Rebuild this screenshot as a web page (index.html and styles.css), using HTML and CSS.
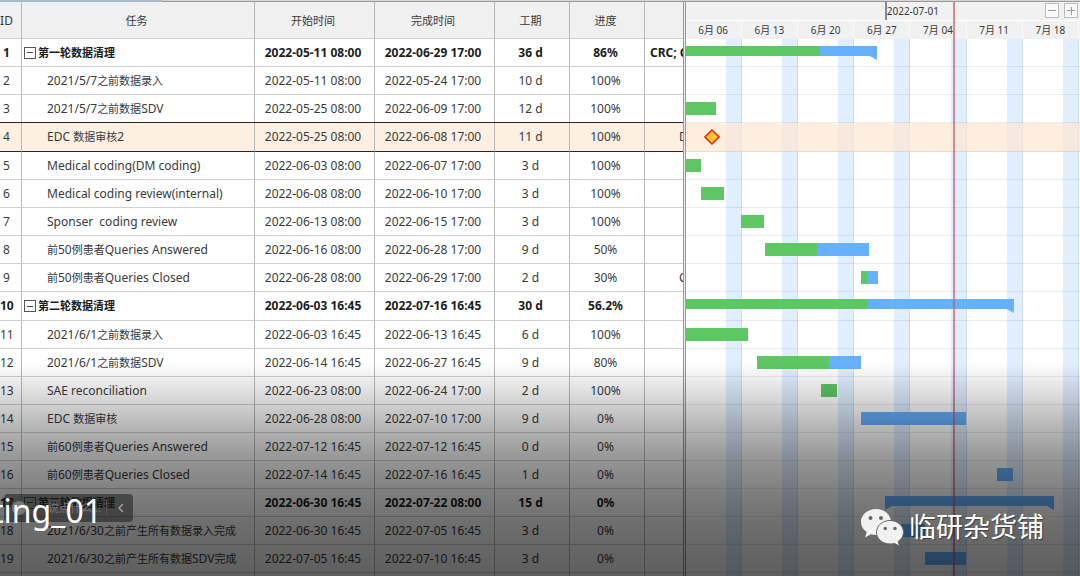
FILE: index.html
```html
<!DOCTYPE html>
<html lang="zh-CN">
<head>
<meta charset="utf-8">
<title>项目计划</title>
<link rel="stylesheet" href="styles.css">
</head>
<body>
<main class="planner">
  <div class="strip"><span class="strip-active"></span></div>
  <div class="panes">
    <section class="sheet">
      <table class="tasks">
        <colgroup><col class="c-id"><col class="c-name"><col class="c-date"><col class="c-date"><col class="c-num"><col class="c-num"><col></colgroup>
        <thead>
          <tr><th class="id">ID</th><th>任务</th><th>开始时间</th><th>完成时间</th><th>工期</th><th>进度</th><th></th></tr>
        </thead>
        <tbody>
          <tr class="group"><td class="id">1</td><td class="name"><button class="fold" aria-label="折叠"></button><span class="zh">第一轮数据清理</span></td><td>2022-05-11 08:00</td><td>2022-06-29 17:00</td><td>36 d</td><td>86%</td><td class="res">CRC; CRA</td></tr>
          <tr><td class="id">2</td><td class="name">2021/5/7<span class="zh">之前数据录入</span></td><td>2022-05-11 08:00</td><td>2022-05-24 17:00</td><td>10 d</td><td>100%</td><td></td></tr>
          <tr><td class="id">3</td><td class="name">2021/5/7<span class="zh">之前数据</span>SDV</td><td>2022-05-25 08:00</td><td>2022-06-09 17:00</td><td>12 d</td><td>100%</td><td></td></tr>
          <tr class="selected tall"><td class="id">4</td><td class="name">EDC <span class="zh">数据审核</span>2</td><td>2022-05-25 08:00</td><td>2022-06-08 17:00</td><td>11 d</td><td>100%</td><td class="res short">DM</td></tr>
          <tr><td class="id">5</td><td class="name">Medical coding(DM coding)</td><td>2022-06-03 08:00</td><td>2022-06-07 17:00</td><td>3 d</td><td>100%</td><td></td></tr>
          <tr><td class="id">6</td><td class="name">Medical coding review(internal)</td><td>2022-06-08 08:00</td><td>2022-06-10 17:00</td><td>3 d</td><td>100%</td><td></td></tr>
          <tr><td class="id">7</td><td class="name">Sponser&nbsp; coding review</td><td>2022-06-13 08:00</td><td>2022-06-15 17:00</td><td>3 d</td><td>100%</td><td></td></tr>
          <tr><td class="id">8</td><td class="name"><span class="zh">前</span>50<span class="zh">例患者</span>Queries Answered</td><td>2022-06-16 08:00</td><td>2022-06-28 17:00</td><td>9 d</td><td>50%</td><td></td></tr>
          <tr><td class="id">9</td><td class="name"><span class="zh">前</span>50<span class="zh">例患者</span>Queries Closed</td><td>2022-06-28 08:00</td><td>2022-06-29 17:00</td><td>2 d</td><td>30%</td><td class="res short">CRC</td></tr>
          <tr class="group tall"><td class="id">10</td><td class="name"><button class="fold" aria-label="折叠"></button><span class="zh">第二轮数据清理</span></td><td>2022-06-03 16:45</td><td>2022-07-16 16:45</td><td>30 d</td><td>56.2%</td><td></td></tr>
          <tr><td class="id">11</td><td class="name">2021/6/1<span class="zh">之前数据录入</span></td><td>2022-06-03 16:45</td><td>2022-06-13 16:45</td><td>6 d</td><td>100%</td><td></td></tr>
          <tr><td class="id">12</td><td class="name">2021/6/1<span class="zh">之前数据</span>SDV</td><td>2022-06-14 16:45</td><td>2022-06-27 16:45</td><td>9 d</td><td>80%</td><td></td></tr>
          <tr><td class="id">13</td><td class="name">SAE reconciliation</td><td>2022-06-23 08:00</td><td>2022-06-24 17:00</td><td>2 d</td><td>100%</td><td></td></tr>
          <tr><td class="id">14</td><td class="name">EDC <span class="zh">数据审核</span></td><td>2022-06-28 08:00</td><td>2022-07-10 17:00</td><td>9 d</td><td>0%</td><td></td></tr>
          <tr><td class="id">15</td><td class="name"><span class="zh">前</span>60<span class="zh">例患者</span>Queries Answered</td><td>2022-07-12 16:45</td><td>2022-07-12 16:45</td><td>0 d</td><td>0%</td><td></td></tr>
          <tr><td class="id">16</td><td class="name"><span class="zh">前</span>60<span class="zh">例患者</span>Queries Closed</td><td>2022-07-14 16:45</td><td>2022-07-16 16:45</td><td>1 d</td><td>0%</td><td></td></tr>
          <tr class="group"><td class="id">17</td><td class="name"><button class="fold" aria-label="折叠"></button><span class="zh">第三轮数据清理</span></td><td>2022-06-30 16:45</td><td>2022-07-22 08:00</td><td>15 d</td><td>0%</td><td></td></tr>
          <tr><td class="id">18</td><td class="name">2021/6/30<span class="zh">之前产生所有数据录入完成</span></td><td>2022-06-30 16:45</td><td>2022-07-05 16:45</td><td>3 d</td><td>0%</td><td></td></tr>
          <tr><td class="id">19</td><td class="name">2021/6/30<span class="zh">之前产生所有数据</span>SDV<span class="zh">完成</span></td><td>2022-07-05 16:45</td><td>2022-07-10 16:45</td><td>3 d</td><td>0%</td><td></td></tr>
          <tr><td></td><td></td><td></td><td></td><td></td><td></td><td></td></tr>
        </tbody>
      </table>
    </section>
    <div class="splitter"></div>
    <section class="gantt">
      <header class="scale">
        <div class="months">
          <span class="month" style="margin-left:50.5%">2022-07-01</span>
          <div class="zoomers"><button class="zoom" aria-label="缩小"></button><button class="zoom plus" aria-label="放大"></button></div>
        </div>
        <div class="weeks"><span>6月 06</span><span>6月 13</span><span>6月 20</span><span>6月 27</span><span>7月 04</span><span>7月 11</span><span>7月 18</span></div>
      </header>
      <div class="chart">
        <div class="weekends"><i></i><i></i><i></i><i></i><i></i><i></i><i></i></div>
        <div class="lanes">
          <div class="lane"><div class="bar sum end" style="width:48.5%"><b style="width:70.2%"></b></div></div>
          <div class="lane"></div>
          <div class="lane"><div class="bar" style="width:7.7%"><b style="width:100%"></b></div></div>
          <div class="lane selected tall"><svg class="milestone" style="margin-left:4.8%" viewBox="0 0 16 16"><path d="M8 1 15 8 8 15 1 8Z" fill="#ffc72c" stroke="#e3301c" stroke-width="1.6"/></svg></div>
          <div class="lane"><div class="bar" style="width:3.9%"><b style="width:100%"></b></div></div>
          <div class="lane"><div class="bar" style="margin-left:3.8%;width:6%"><b style="width:100%"></b></div></div>
          <div class="lane"><div class="bar" style="margin-left:14%;width:6%"><b style="width:100%"></b></div></div>
          <div class="lane"><div class="bar" style="margin-left:20.1%;width:26.4%"><b style="width:50%"></b></div></div>
          <div class="lane"><div class="bar" style="margin-left:44.6%;width:4.2%"><b style="width:33%"></b></div></div>
          <div class="lane tall"><div class="bar sum end" style="width:83.2%"><b style="width:55.6%"></b></div></div>
          <div class="lane"><div class="bar" style="width:15.9%"><b style="width:100%"></b></div></div>
          <div class="lane"><div class="bar" style="margin-left:18%;width:26.4%"><b style="width:70%"></b></div></div>
          <div class="lane"><div class="bar" style="margin-left:34.3%;width:4%"><b style="width:100%"></b></div></div>
          <div class="lane"><div class="bar" style="margin-left:44.6%;width:26.5%"></div></div>
          <div class="lane"></div>
          <div class="lane"><div class="bar" style="margin-left:79%;width:4.1%"></div></div>
          <div class="lane"><div class="bar sum start end" style="margin-left:50.6%;width:42.8%"></div></div>
          <div class="lane"><div class="bar" style="margin-left:50.6%;width:10.2%"></div></div>
          <div class="lane"><div class="bar" style="margin-left:60.7%;width:10.4%"></div></div>
          <div class="lane"></div>
        </div>
      </div>
      <div class="today" style="left:67.9%"></div>
    </section>
  </div>
  <div class="shade"></div>
  <div class="comment-box">
    <span class="face"></span><span class="hint">说点什么...</span>
    <svg class="chevron" viewBox="0 0 8 12"><path d="M6 2 2 6l4 4" fill="none" stroke="#aaa" stroke-width="1.3"/></svg>
  </div>
  <div class="caption">ting_01</div>
  <div class="watermark">
    <svg class="wechat" viewBox="0 0 44 38">
      <path d="M16 1C7.500 1 1 6.800 1 14c0 4.200 2.200 7.700 5.700 10L5 29.500l6-3.300c1.600.5 3.300.7 5 .7C24.500 27 31 21.200 31 14S24.500 1 16 1Z" fill="#f1f1f1"/>
      <circle cx="10.500" cy="10" r="2" fill="#666"/><circle cx="21" cy="10" r="2" fill="#666"/>
      <path d="M30 12.500c-7.500 0-13.500 5.200-13.500 11.800S22.500 36 30 36c1.500 0 3-.2 4.400-.6l5.200 2.800-1.500-4.700c3.300-2.200 5.400-5.400 5.400-9.200 0-6.600-6-11.800-13.500-11.800Z" fill="#f1f1f1" stroke="#666" stroke-width="1"/>
      <circle cx="25.300" cy="20.500" r="1.700" fill="#666"/><circle cx="35" cy="20.500" r="1.700" fill="#666"/>
    </svg>
    <span>临研杂货铺</span>
  </div>
</main>
</body>
</html>
```
FILE: styles.css
```css
* { box-sizing: border-box; }
body {
  margin: 0;
  background: #fff;
  color: #3a3a3a;
  font: 12px/16px "Noto Sans", "Noto Sans CJK SC", sans-serif;
}
button { padding: 0; font: inherit; }
.planner { position: relative; height: 100vh; overflow: hidden; }
.strip { height: 2px; background: #d6d6d6; border-bottom: 1px solid #999; }
.strip-active { display: block; width: 15%; height: 2px; background: #a9bccd; }
.panes { display: flex; }

.sheet { flex: 0 0 63.2%; min-width: 0; overflow: hidden; }
.tasks { width: 100%; table-layout: fixed; border-spacing: 0; }
.c-id { width: 22px; }
.c-name { width: 233px; }
.c-date { width: 120px; }
.c-num { width: 75px; }
.tasks th, .tasks td {
  height: 28px;
  padding: 0 3px 0 0;
  border-right: 1px solid #b9b9b9;
  border-bottom: 1px solid #cfcfcf;
  text-align: center;
  white-space: nowrap;
  overflow: hidden;
}
.tasks th:last-child, .tasks td:last-child { padding-right: 0; border-right: 0; }
.tasks th { height: 37px; padding-top: 2px; background: #f0f0f0; font-weight: 400; font-size: 11px; }
.tasks .tall td { height: 29px; }
.tasks .id { padding-right: 8px; overflow: visible; }
.tasks th.id { font-size: 12px; }
.tasks .name { padding-left: 25px; text-align: left; }
.tasks .group td { color: #1c1c1c; font-weight: 700; }
.tasks .group .name { padding-left: 2px; }
.tasks .res { padding-left: 5px; text-align: left; }
.tasks .short { padding-left: 34px; }
.tasks .selected td {
  background: #fdefe2;
  border-bottom-color: #2a2622;
  box-shadow: 0 -1px #2a2622;
}
.zh { font-size: 11px; }
.fold {
  width: 12px;
  height: 12px;
  margin-right: 2px;
  border: 1px solid #555;
  background: none;
  vertical-align: -1px;
}
.fold::before { content: ""; display: block; height: 1px; margin: 0 2px; background: #444; }

.splitter { flex: 0 0 3px; background: #ececec; border: solid #999; border-width: 0 1px; }

.gantt { position: relative; flex: 1; min-width: 0; }
.scale { height: 37px; background: #f1f1f1; font-size: 10px; }
.months { display: flex; height: 19px; border-bottom: 1px solid #fff; }
.month { border-left: 2px solid #888; line-height: 18px; }
.zoomers { display: flex; gap: 5px; margin: 1px 2px 0 auto; }
.zoom {
  width: 14px;
  height: 15px;
  border: 1px solid #bbb;
  background: linear-gradient(#999, #999) center / 8px 1px no-repeat #fafafa;
}
.plus {
  background: linear-gradient(#999, #999) center / 8px 1px no-repeat,
    linear-gradient(#999, #999) center / 1px 8px no-repeat #fafafa;
}
.weeks, .weekends { display: grid; grid-template-columns: repeat(7, 1fr); padding-right: 1px; }
.weeks span { border-right: 1px solid #fafafa; text-align: center; line-height: 18px; }
.chart { display: grid; }
.weekends, .lanes { grid-area: 1 / 1; }
.weekends i {
  justify-self: end;
  width: 16px;
  background: #e0eeff;
  border-right: 1px solid #cbdcee;
}
.lane { height: 28px; padding-top: 7px; border-bottom: 1px solid rgba(90, 110, 130, .13); }
.lane.tall { height: 29px; }
.lane.selected { padding-top: 6px; background: rgba(253, 231, 211, .7); }
.bar { position: relative; height: 13px; background: #66b1ff; }
.bar b { display: block; height: 100%; background: #5dc763; }
.sum { height: 10px; }
.end::after, .start::before {
  content: "";
  position: absolute;
  top: 100%;
  right: 0;
  width: 7px;
  height: 4px;
  background: #66b1ff;
  clip-path: polygon(0 0, 100% 0, 100% 100%);
}
.start::before { right: auto; left: 0; clip-path: polygon(0 0, 100% 0, 0 100%); }
.milestone { display: block; width: 16px; height: 16px; }
.today { position: absolute; top: 0; bottom: 0; width: 2px; background: rgba(200, 85, 95, .65); }

.shade {
  position: absolute;
  inset: auto 0 0;
  height: 37%;
  background: linear-gradient(transparent, rgba(0, 0, 0, .14) 15%, rgba(0, 0, 0, .28) 29%, rgba(0, 0, 0, .42) 46%, rgba(0, 0, 0, .5) 60%, rgba(0, 0, 0, .57) 75%, rgba(0, 0, 0, .63));
}
.comment-box {
  position: absolute;
  left: 4px;
  bottom: 54px;
  display: flex;
  align-items: center;
  width: 129px;
  height: 28px;
  padding: 0 8px;
  border-radius: 4px;
  background: rgba(30, 30, 30, .55);
  color: #777;
}
.face { width: 14px; height: 14px; border-radius: 50%; background: #777; }
.hint { flex: 1; margin-left: 22px; border-right: 1px solid #555; font-size: 11px; }
.chevron { width: 8px; height: 12px; margin-left: 10px; }
.caption {
  position: absolute;
  left: -8px;
  bottom: 45px;
  color: #fff;
  font-size: 32px;
  line-height: 40px;
}
.watermark {
  position: absolute;
  right: 36px;
  bottom: 29px;
  display: flex;
  align-items: center;
  gap: 5px;
  color: #fff;
  font-size: 27px;
  line-height: 40px;
  text-shadow: 1px 1px 1px rgba(0, 0, 0, .4);
}
.wechat { width: 44px; height: 38px; }
```
